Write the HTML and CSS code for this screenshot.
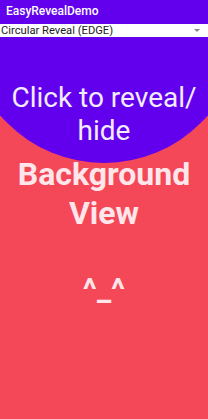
FILE: index.html
```html
<!DOCTYPE html>
<html lang="en">
<head>
    <meta charset="UTF-8">
    <meta name="viewport" content="width=device-width, initial-scale=1.0">
    <title>EasyRevealDemo</title>
    <link rel="stylesheet" href="styles.css">
</head>
<body>
    <div class="app">
        <header class="appBar">EasyRevealDemo</header>

        <div class="spinner">
            <span class="spinnerText">Circular Reveal (EDGE)</span>
            <span class="spinnerArrow"></span>
        </div>

        <div class="stage">
            <div class="backgroundView">
                <div class="bgTitle">Background<br>View</div>
                <div class="bgFace">^_^</div>
            </div>
            <div class="revealView">
                <div class="revealText">Click to reveal/<br>hide</div>
            </div>
        </div>
    </div>
</body>
</html>
```

FILE: styles.css
```css
body {
    margin: 0;
    font-family: Roboto, "Noto Sans", sans-serif;
}

.app {
    width: 208px;
    height: 419px;
    display: flex;
    flex-direction: column;
    overflow: hidden;
}

.appBar {
    height: 24px;
    background: #6200ee;
    color: #ffffff;
    font-size: 12px;
    font-weight: 500;
    line-height: 22px;
    padding-left: 6px;
}

.spinner {
    height: 13px;
    background: #ffffff;
    display: flex;
    align-items: center;
    justify-content: space-between;
    padding: 0 8px 0 1px;
}

.spinnerText {
    font-size: 11.2px;
    color: #222222;
    line-height: 13px;
}

/* small dropdown triangle */
.spinnerArrow {
    width: 0;
    height: 0;
    border-left: 3px solid transparent;
    border-right: 3px solid transparent;
    border-top: 3px solid #8a8a8a;
}

/* both layers stacked in one grid cell */
.stage {
    flex: 1;
    display: grid;
}

.backgroundView,
.revealView {
    grid-area: 1 / 1;
    text-align: center;
}

.backgroundView {
    background: #f44858;
    color: #ffe6ea;
    font-weight: bold;
    padding-top: 118px;
}

.bgTitle {
    font-size: 32px;
    line-height: 39px;
}

.bgFace {
    font-size: 32px;
    line-height: 36px;
    margin-top: 38px;
}

.revealView {
    background: #6200ee;
    clip-path: circle(137px at 104px -11px);
    padding-top: 44px;
}

.revealText {
    color: #f3ecff;
    font-size: 28px;
    line-height: 33px;
}
```
